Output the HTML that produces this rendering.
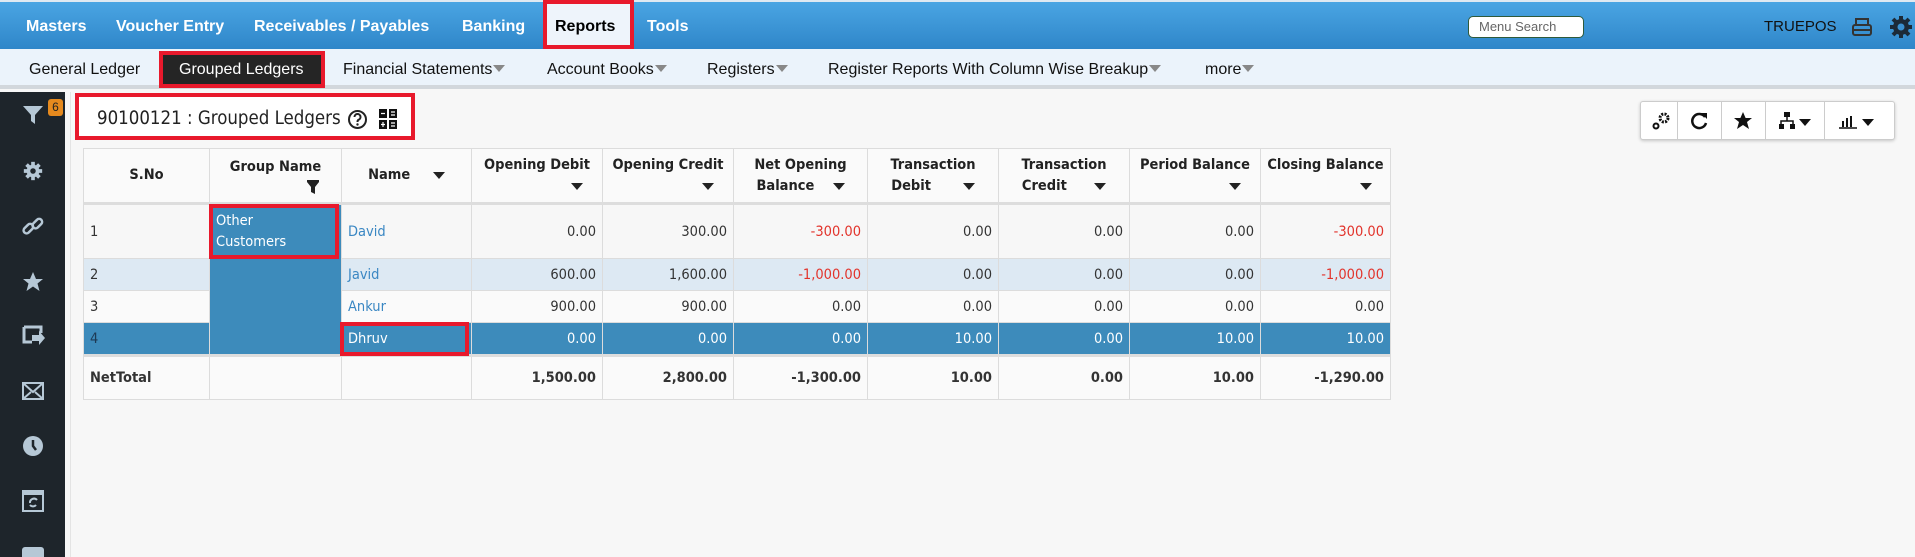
<!DOCTYPE html>
<html><head><meta charset="utf-8"><style>
*{box-sizing:border-box;margin:0;padding:0}
body{width:1915px;height:557px;overflow:hidden;background:#f7f7f7;font-family:"Liberation Sans",Arial,sans-serif;position:relative}
.top{position:absolute;left:0;top:0;width:1915px;height:49px;background:linear-gradient(#4aa5e3,#2f86c9);border-top:2px solid #dfe9f2}
.top .m{position:absolute;top:16px;color:#fff;font-weight:bold;font-size:16px}
.sub{position:absolute;left:0;top:49px;width:1915px;height:40px;background:#ebf3fb;border-bottom:4px solid #d2d7dc}
.sub .s{position:absolute;top:12px;font-size:16px;color:#111}
.tri{display:inline-block;width:0;height:0;border-left:6px solid transparent;border-right:6px solid transparent;border-top:7px solid #888;margin-left:1px;vertical-align:2px}
.red{position:absolute;border:4px solid #e8192c}
.side{position:absolute;left:0;top:92px;width:65px;height:465px;background:#1e252b}
.side svg{position:absolute;left:22px}
.panel{position:absolute;left:70px;top:92px;width:1845px;height:465px;background:#f7f7f7;border-left:1px solid #e4e4e4}
table{position:absolute;left:83px;top:148px;border-collapse:collapse;font-family:"DejaVu Sans Condensed","DejaVu Sans",sans-serif;font-size:14.5px;color:#333;table-layout:fixed}
td,th{border:1px solid #dcdcdc;padding:0 6px}
th{font-weight:bold;font-size:14.5px;color:#222;height:55px;border-bottom:3px solid #ddd;background:#fafafa;line-height:21px}
td{text-align:right}
td.l{text-align:left}
.a{color:#3a87c3}
.n{color:#e2332b}
.sel td{background:#3d8bbb;color:#fff}
.st td{background:#dde9f3}
.g{background:#3d8bbb!important;color:#fff}
.dt{display:inline-block;width:0;height:0;border-left:6px solid transparent;border-right:6px solid transparent;border-top:7px solid #222}
.tb{position:absolute;left:1640px;top:101px;width:255px;height:39px;background:#fff;border:1px solid #ccc;border-radius:3px;box-shadow:0 1px 3px rgba(0,0,0,.2)}
.tb div{position:absolute;top:0;height:37px;border-left:1px solid #ccc}
</style></head><body>
<div class="top">
<span class="m" style="left:26px">Masters</span>
<span class="m" style="left:116px">Voucher Entry</span>
<span class="m" style="left:254px">Receivables / Payables</span>
<span class="m" style="left:462px">Banking</span>
<div style="position:absolute;left:543px;top:-2px;width:91px;height:51px;background:#eef4fb"></div>
<span class="m" style="left:555px;color:#000">Reports</span>
<span class="m" style="left:647px">Tools</span>
<div style="position:absolute;left:1468px;top:14px;width:116px;height:22px;background:#fff;border:1px solid #2f5a3a;border-radius:5px;font-size:13px;color:#666;padding:2px 0 0 10px">Menu Search</div>
<span style="position:absolute;left:1764px;top:16px;color:#111;font-size:15px">TRUEPOS</span>
<svg style="position:absolute;left:1851px;top:15px" width="22" height="22" viewBox="0 0 22 22"><rect x="5" y="2" width="12" height="6" fill="none" stroke="#333" stroke-width="2"/><rect x="2" y="8" width="18" height="10" rx="2" fill="none" stroke="#333" stroke-width="2"/><line x1="3" y1="13" x2="19" y2="13" stroke="#333" stroke-width="2"/></svg>
<svg style="position:absolute;left:1889px;top:13px" width="24" height="24" viewBox="0 0 24 24"><g fill="#1c2a38"><circle cx="12" cy="12" r="8"/><g stroke="#1c2a38" stroke-width="4"><line x1="12" y1="1" x2="12" y2="23"/><line x1="1" y1="12" x2="23" y2="12"/><line x1="4" y1="4" x2="20" y2="20"/><line x1="20" y1="4" x2="4" y2="20"/></g></g><circle cx="12" cy="12" r="3.5" fill="#3a90d0"/></svg>
</div>
<div class="red" style="left:543px;top:0;width:91px;height:49px"></div>
<div class="sub">
<span class="s" style="left:29px">General Ledger</span>
<div style="position:absolute;left:159px;top:2px;width:166px;height:35px;background:#252525"></div>
<span class="s" style="left:179px;color:#fff">Grouped Ledgers</span>
<span class="s" style="left:343px">Financial Statements<i class="tri"></i></span>
<span class="s" style="left:547px">Account Books<i class="tri"></i></span>
<span class="s" style="left:707px">Registers<i class="tri"></i></span>
<span class="s" style="left:828px">Register Reports With Column Wise Breakup<i class="tri"></i></span>
<span class="s" style="left:1205px">more<i class="tri"></i></span>
</div>
<div class="red" style="left:159px;top:51px;width:166px;height:37px"></div>
<div class="panel"></div>
<div class="side">
<svg style="top:12px" width="22" height="22" viewBox="0 0 22 22"><path d="M1 2h20l-8 9v9l-4-3v-6z" fill="#b6c8d6"/></svg>
<div style="position:absolute;left:48px;top:7px;width:15px;height:17px;background:#e68a1e;border-radius:3px;color:#222;font-size:12px;text-align:center;line-height:17px">6</div>
<svg style="top:68px" width="22" height="22" viewBox="0 0 24 24"><g fill="#b6c8d6"><circle cx="12" cy="12" r="7"/><g stroke="#b6c8d6" stroke-width="4"><line x1="12" y1="2" x2="12" y2="22"/><line x1="2" y1="12" x2="22" y2="12"/><line x1="5" y1="5" x2="19" y2="19"/><line x1="19" y1="5" x2="5" y2="19"/></g></g><circle cx="12" cy="12" r="3" fill="#1e252b"/></svg>
<svg style="top:124px" width="22" height="22" viewBox="0 0 22 22"><g fill="none" stroke="#b6c8d6" stroke-width="2.5"><rect x="1" y="10" width="11" height="6" rx="3" transform="rotate(-45 6 13)"/><rect x="10" y="5" width="11" height="6" rx="3" transform="rotate(-45 15 8)"/></g></svg>
<svg style="top:179px" width="22" height="22" viewBox="0 0 22 22"><path d="M11 1l3 7h7l-5.5 4.5 2 7.5-6.5-4.5-6.5 4.5 2-7.5L1 8h7z" fill="#b6c8d6"/></svg>
<svg style="top:233px" width="24" height="22" viewBox="0 0 24 22"><path d="M2 2h17v6M2 2v15h8" fill="none" stroke="#b6c8d6" stroke-width="3"/><path d="M10 10h7v-4l6 7-6 7v-4h-7z" fill="#b6c8d6"/></svg>
<svg style="top:290px" width="22" height="18" viewBox="0 0 22 18"><rect x="1" y="1" width="20" height="16" fill="none" stroke="#b6c8d6" stroke-width="2"/><path d="M1 1l10 9 10-9M1 17l8-7M21 17l-8-7" fill="none" stroke="#b6c8d6" stroke-width="2"/></svg>
<svg style="top:343px" width="22" height="22" viewBox="0 0 22 22"><circle cx="11" cy="11" r="10" fill="#b6c8d6"/><path d="M11 5v6l3 4" stroke="#1e252b" stroke-width="2.5" fill="none"/></svg>
<svg style="top:398px" width="22" height="22" viewBox="0 0 22 22"><rect x="1" y="1" width="20" height="20" fill="none" stroke="#b6c8d6" stroke-width="2"/><rect x="1" y="1" width="20" height="4" fill="#b6c8d6"/><path d="M8 13a4 4 0 0 1 7-3M14 15a4 4 0 0 1-6 0" fill="none" stroke="#b6c8d6" stroke-width="2"/></svg>
<div style="position:absolute;left:22px;top:455px;width:22px;height:10px;background:#b6c8d6;border-radius:3px 3px 0 0"></div>
</div>
<div style="position:absolute;left:75px;top:93px;width:340px;height:47px;background:#fff"></div>
<div class="red" style="left:75px;top:93px;width:340px;height:47px"></div>
<span style="position:absolute;left:97px;top:108px;font-family:'DejaVu Sans Condensed','DejaVu Sans',sans-serif;font-size:18.5px;color:#222">90100121 : Grouped Ledgers</span>
<svg style="position:absolute;left:347px;top:109px" width="21" height="21" viewBox="0 0 21 21"><circle cx="10.5" cy="10.5" r="8.5" fill="none" stroke="#222" stroke-width="2"/><path d="M7.5 8a3 3 0 1 1 4 2.8c-1 .5-1 1-1 2.2" fill="none" stroke="#222" stroke-width="2"/><circle cx="10.5" cy="15.5" r="1.2" fill="#222"/></svg>
<svg style="position:absolute;left:379px;top:109px" width="18" height="20" viewBox="0 0 18 20"><rect x="0" y="0" width="8" height="9" fill="#111"/><rect x="10" y="0" width="8" height="9" fill="#111"/><rect x="0" y="11" width="8" height="9" fill="#111"/><rect x="10" y="11" width="8" height="9" fill="#111"/><path d="M2 4.5h4M12 3h4M12 6h4M4 13v5M2 15.5h4M12 14h4M12 17h4" stroke="#fff" stroke-width="1.2"/></svg>
<div class="tb">
<div style="left:36px"></div><div style="left:80px"></div><div style="left:124px"></div><div style="left:183px"></div>
<svg style="position:absolute;left:10px;top:9px" width="20" height="20" viewBox="0 0 20 20"><circle cx="13" cy="7" r="4" fill="none" stroke="#111" stroke-width="3" stroke-dasharray="2 1.2"/><circle cx="5" cy="15" r="2.5" fill="none" stroke="#111" stroke-width="2"/></svg>
<svg style="position:absolute;left:48px;top:9px" width="20" height="20" viewBox="0 0 20 20"><path d="M16 6A7 7 0 1 0 17 12" fill="none" stroke="#111" stroke-width="2.5"/><path d="M12 2h6v6z" fill="#111"/></svg>
<svg style="position:absolute;left:92px;top:9px" width="20" height="20" viewBox="0 0 20 20"><path d="M10 1l2.6 6h6.4l-5 4 2 7-6-4-6 4 2-7-5-4h6.4z" fill="#111"/></svg>
<svg style="position:absolute;left:138px;top:10px" width="16" height="18" viewBox="0 0 16 18"><rect x="5" y="0" width="6" height="5" fill="#111"/><path d="M8 5v4M2 12V9h12v3" fill="none" stroke="#111" stroke-width="1.5"/><rect x="0" y="12" width="5" height="5" fill="#111"/><rect x="11" y="12" width="5" height="5" fill="#111"/></svg>
<i class="dt" style="position:absolute;left:158px;top:17px;border-top-color:#111"></i>
<svg style="position:absolute;left:198px;top:11px" width="18" height="16" viewBox="0 0 18 16"><path d="M0 15h18" stroke="#111" stroke-width="1.5"/><rect x="3" y="8" width="2" height="6" fill="#111"/><rect x="7" y="5" width="2" height="9" fill="#111"/><rect x="11" y="3" width="2" height="11" fill="#111"/></svg>
<i class="dt" style="position:absolute;left:221px;top:17px;border-top-color:#111"></i>
</div>
<table>
<colgroup><col style="width:126px"><col style="width:132px"><col style="width:130px"><col style="width:131px"><col style="width:131px"><col style="width:134px"><col style="width:131px"><col style="width:131px"><col style="width:131px"><col style="width:130px"></colgroup>
<tr><th>S.No</th><th style="text-align:center">Group Name<br><svg style="float:right;margin:2px 16px 0 0" width="12" height="14" viewBox="0 0 12 14"><path d="M0 0h12v2l-4 5v7l-4-2v-5l-4-5z" fill="#222"/></svg></th><th>Name &nbsp;&nbsp;&nbsp; <i class="dt"></i></th><th style="text-align:center">Opening Debit<br><i class="dt" style="margin-left:80px"></i></th><th style="text-align:center">Opening Credit<br><i class="dt" style="margin-left:80px"></i></th><th>Net Opening<br>Balance &nbsp;&nbsp; <i class="dt"></i></th><th>Transaction<br>Debit &nbsp;&nbsp;&nbsp;&nbsp;&nbsp; <i class="dt"></i></th><th>Transaction<br>Credit &nbsp;&nbsp;&nbsp;&nbsp; <i class="dt"></i></th><th style="text-align:center">Period Balance<br><i class="dt" style="margin-left:80px"></i></th><th style="text-align:center">Closing Balance<br><i class="dt" style="margin-left:80px"></i></th></tr>
<tr style="height:55px"><td class="l">1</td><td class="l g" rowspan="4" style="vertical-align:top;padding-top:6px;line-height:21px">Other<br>Customers</td><td class="l a">David</td><td>0.00</td><td>300.00</td><td class="n">-300.00</td><td>0.00</td><td>0.00</td><td>0.00</td><td class="n">-300.00</td></tr>
<tr class="st" style="height:32px"><td class="l">2</td><td class="l a">Javid</td><td>600.00</td><td>1,600.00</td><td class="n">-1,000.00</td><td>0.00</td><td>0.00</td><td>0.00</td><td class="n">-1,000.00</td></tr>
<tr style="height:32px;background:#fafafa"><td class="l">3</td><td class="l a">Ankur</td><td>900.00</td><td>900.00</td><td>0.00</td><td>0.00</td><td>0.00</td><td>0.00</td><td>0.00</td></tr>
<tr class="sel" style="height:33px"><td class="l" style="color:#1e3a55">4</td><td class="l">Dhruv</td><td>0.00</td><td>0.00</td><td>0.00</td><td>10.00</td><td>0.00</td><td>10.00</td><td>10.00</td></tr>
<tr style="height:44px;font-weight:bold;background:#fafafa"><td class="l" style="border-top:3px solid #ddd">NetTotal</td><td style="border-top:3px solid #ddd"></td><td style="border-top:3px solid #ddd"></td><td style="border-top:3px solid #ddd">1,500.00</td><td style="border-top:3px solid #ddd">2,800.00</td><td style="border-top:3px solid #ddd">-1,300.00</td><td style="border-top:3px solid #ddd">10.00</td><td style="border-top:3px solid #ddd">0.00</td><td style="border-top:3px solid #ddd">10.00</td><td style="border-top:3px solid #ddd">-1,290.00</td></tr>
</table>
<div class="red" style="left:209px;top:204px;width:130px;height:55px"></div>
<div class="red" style="left:340px;top:322px;width:129px;height:34px"></div>
</body></html>
